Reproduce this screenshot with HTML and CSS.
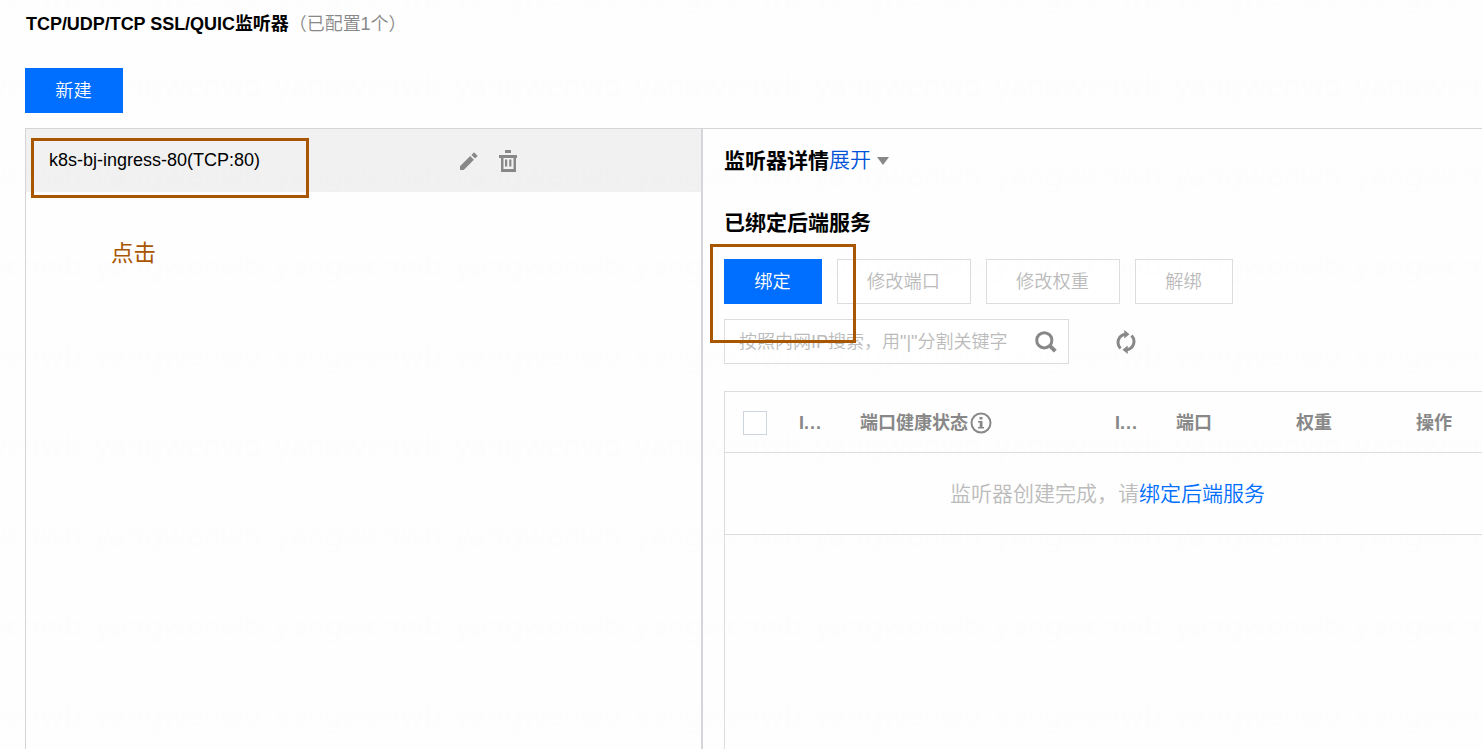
FILE: index.html
```html
<!DOCTYPE html>
<html lang="zh-CN">
<head>
<meta charset="utf-8">
<title>监听器管理</title>
<link rel="stylesheet" href="styles.css">
</head>
<body>
<main class="page">
  <h1 class="title">TCP/UDP/TCP SSL/QUIC监听器<span class="count">（已配置1个）</span></h1>
  <button class="btn primary create">新建</button>
  <div class="panels">
    <section class="list">
      <div class="item">
        <span class="item-name">k8s-bj-ingress-80(TCP:80)</span>
        <svg class="edit" width="20" height="20" viewBox="0 0 20 20" fill="#888"><path d="M1 15.3 11.2 5.1 14.9 8.8 4.700 19H1zM12.400 3.900 15.100 1.300 18.700 4.900 16.100 7.500z"/></svg>
        <svg class="trash" width="18" height="22" viewBox="0 0 18 22" fill="#888"><path d="M6 0h6v3H6zM0 5h18v3h-1v14H2V8H0zM4.500 8v11h10V8z" fill-rule="evenodd"/><path d="M6 9.500h2.200v7H6zM10.200 9.500h2.200v7h-2.200z"/></svg>
      </div>
    </section>
    <section class="detail">
      <h2 class="detail-title">监听器详情<a class="toggle">展开</a><i class="caret"></i></h2>
      <h2 class="bound-title">已绑定后端服务</h2>
      <div class="actions">
        <button class="btn primary">绑定</button>
        <button class="btn">修改端口</button>
        <button class="btn">修改权重</button>
        <button class="btn">解绑</button>
      </div>
      <div class="tools">
        <div class="search"><span>按照内网IP搜索，用"|"分割关键字</span>
          <svg width="22" height="22" viewBox="0 0 22 22" fill="none" stroke="#888"><circle cx="9.300" cy="9.300" r="7.600" stroke-width="3"/><path d="m14.600 14.600 5.700 5.500" stroke-width="4"/></svg>
        </div>
        <svg class="refresh" width="20" height="24" viewBox="0 0 20 24"><g fill="none" stroke="#888" stroke-width="3"><path d="M4.500 18.500C.2 14 1.500 5.500 9.500 4.200"/><path d="M15.500 5.500C19.800 10 18.500 18.500 10.500 19.800"/></g><path d="M8.300 0v8.600L13.500 4.300zM11.700 24v-8.600L6.500 19.700z" fill="#888"/></svg>
      </div>
      <div class="table">
        <div class="row head">
          <i class="check"></i><span>I<b class="dots">...</b></span>
          <span class="health">端口健康状态<svg width="22" height="22" viewBox="0 0 22 22" fill="#888"><circle cx="11" cy="11" r="9.500" fill="none" stroke="#888" stroke-width="2"/><path d="M9.500 5h3v2.500h-3zM8 9h4.500v6H14v1.600H8V15h1.700v-4.400H8z"/></svg></span>
          <span>I<b class="dots">...</b></span><span>端口</span><span>权重</span><span>操作</span>
        </div>
        <div class="row empty">监听器创建完成，请<a>绑定后端服务</a></div>
      </div>
    </section>
  </div>
</main>
<svg class="watermark" width="1482" height="749">
  <defs><pattern id="wm" x="95" y="70" width="180" height="90" patternUnits="userSpaceOnUse"><text x="0" y="26" textLength="180">yangwenwb_</text></pattern></defs>
  <rect width="1482" height="749" fill="url(#wm)"/>
</svg>
<div class="mark mark-item"></div>
<div class="mark mark-bind"></div>
<div class="mark-text">点击</div>
</body>
</html>
```
FILE: styles.css
```css
* { box-sizing: border-box; }
body {
  margin: 0;
  height: 749px;
  overflow: hidden;
  background: #fefefe;
  color: #000;
  font: 18px/24px "Liberation Sans", "Noto Sans CJK SC", sans-serif;
}
svg { display: block; flex: none; }
.page { display: flex; flex-direction: column; height: 749px; padding: 12px 0 0 25px; }
.title { margin: 0 0 32px; padding-left: 1px; font-size: 18px; line-height: 24px; letter-spacing: -.04px; white-space: nowrap; }
.count { color: #888; font-weight: 350; }
.btn {
  height: 45px;
  padding: 2px 30px 0 29px;
  border: 1px solid #ddd;
  background: #fff;
  color: #bbb;
  font: 350 18.200px/41px "Liberation Sans", "Noto Sans CJK SC", sans-serif;
  white-space: nowrap;
  width: 134px;
}
.primary { border-color: #006eff; background: #006eff; color: #fff; }
.primary, .btn:last-child { width: 98px; }
.create { align-self: flex-start; flex: none; }
.panels { display: flex; flex: 1; margin-top: 15px; border-top: 1px solid #d5d5d8; }
.list { width: 678px; flex: none; border-left: 1px solid #d5d5d8; border-right: 2px solid #d5d5da; }
.item { display: flex; align-items: flex-start; height: 63px; padding: 19px 0 0 23px; background: #f1f1f1; }
.item-name { width: 410px; }
.edit { margin: 3px 20px 0 0; }
.trash { margin-top: 2px; }
.detail { flex: 1; min-width: 0; padding: 16px 0 0 21px; display: flex; flex-direction: column; }
.detail-title, .bound-title { display: flex; align-items: center; margin: 0; font-size: 21px; line-height: 32px; }
.toggle { margin-top: -3px; color: #0052d9; font-weight: 350; }
.caret { margin-left: 6px; border: 6px solid transparent; border-top: 8px solid #888; border-bottom: 0; }
.bound-title { margin-top: 30px; }
.actions { display: flex; gap: 15px; margin-top: 20px; }
.tools { display: flex; align-items: center; margin-top: 15px; }
.search { display: flex; align-items: center; justify-content: space-between; width: 345px; height: 45px; padding: 0 11px 0 14px; border: 1px solid #ddd; background: #fff; color: #bbb; font-weight: 350; white-space: nowrap; }
.refresh { margin-left: 47px; }
.table { flex: 1; margin-top: 27px; border: 1px solid #ddd; border-width: 1px 0 0 1px; }
.row { border-bottom: 1px solid #ddd; }
.head { display: grid; grid-template-columns: 56px 61px 255px 61px 120px 120px auto; align-items: center; height: 61px; padding: 2px 0 0 18px; color: #888; font-weight: 700; white-space: nowrap; }
.dots { letter-spacing: 1px; }
.check { width: 24px; height: 24px; border: 1px solid #cfd5de; background: #fff; }
.health { display: flex; align-items: center; }
.health svg { margin-left: 2px; }
.empty { height: 82px; padding: 1px 0 0 225px; color: #bbb; font-size: 21px; font-weight: 350; line-height: 80px; white-space: nowrap; }
.empty a { color: #006eff; }
.watermark { position: absolute; left: 0; top: 0; pointer-events: none; }
.watermark text { fill: #000; fill-opacity: .003; font: 29.500px "Noto Sans", sans-serif; }
/* Annotations drawn over the console */
.mark { position: absolute; border: 3px solid #a95600; }
.mark-item { left: 31px; top: 138px; width: 278px; height: 60px; }
.mark-bind { left: 710px; top: 244px; width: 146px; height: 99px; }
.mark-text { position: absolute; left: 111px; top: 238px; color: #a95600; font-size: 22.500px; line-height: 32px; }
```
